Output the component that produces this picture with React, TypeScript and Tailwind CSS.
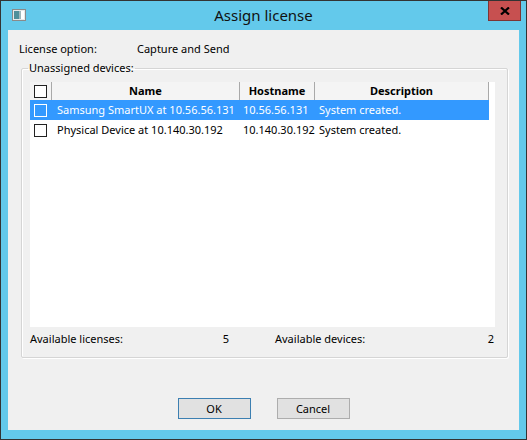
import React from "react";

type Device = { name: string; host: string; desc: string; selected?: boolean };

const devices: Device[] = [
  { name: "Samsung SmartUX at 10.56.56.131", host: "10.56.56.131", desc: "System created.", selected: true },
  { name: "Physical Device at 10.140.30.192", host: "10.140.30.192", desc: "System created." },
];

function WindowIcon() {
  return (
    <svg width="14" height="12" viewBox="0 0 14 12">
      <rect x="0.5" y="0.5" width="13" height="11" fill="#e8e8e8" stroke="#8a8a8a" />
      <rect x="2" y="2" width="5" height="8" fill="#4f8f9a" />
      <rect x="7" y="2" width="2" height="8" fill="#9fb7bb" />
      <rect x="9" y="2" width="3" height="8" fill="#ffffff" />
    </svg>
  );
}

function CloseGlyph() {
  return (
    <svg width="10" height="8" viewBox="0 0 10 8">
      <path d="M1 0.5 L9 7.5 M9 0.5 L1 7.5" stroke="#000" strokeWidth="2.2" />
    </svg>
  );
}

function Check({ light }: { light?: boolean }) {
  return (
    <div
      className={
        light
          ? "w-[13px] h-[13px] border border-white"
          : "w-[13px] h-[13px] border border-[#222] bg-white"
      }
    />
  );
}

export default function App() {
  return (
    <div className="w-[527px] h-[440px] border border-[#333] bg-[#63c9eb] flex flex-col font-['Noto_Sans','Liberation_Sans',sans-serif] text-[11px] text-black">
      {/* Title bar */}
      <div className="h-[29px] grid grid-cols-[1fr_auto_1fr]">
        <div className="pl-[11px] pt-[8px]">
          <WindowIcon />
        </div>
        <div className="pt-[4px] text-[15px] leading-[20px] text-[#111]">Assign license</div>
        <div className="flex justify-end pr-[5px]">
          <button className="w-[33px] h-[20px] bg-[#c75050] border border-t-0 border-[#7d3434] flex items-center justify-center">
            <CloseGlyph />
          </button>
        </div>
      </div>

      {/* Client area */}
      <div className="mx-[7px] h-[400px] bg-[#f0f0f0] flex flex-col">
        <div className="flex pl-[11px] pt-[11px] leading-[16px]">
          <span className="w-[118px]">License option:</span>
          <span>Capture and Send</span>
        </div>

        <fieldset className="mt-[3px] ml-[13px] mr-[11px] h-[298px] border border-[#d5d5d5] rounded-[2px] px-[8px] shadow-[inset_1px_1px_0_#fff,1px_1px_0_#fff]">
          <legend className="ml-[-2px] px-[1px] leading-[16px]">Unassigned devices:</legend>

          <div className="mt-[6px] w-[465px] h-[245px] bg-white">
            {/* Header */}
            <div className="flex h-[18px] bg-[#f4f4f4] w-[459px] font-bold">
              <div className="w-[22px] border-r border-[#a9a9a9] flex items-center pl-[4px]">
                <Check />
              </div>
              <div className="w-[188px] border-r border-[#a9a9a9] flex items-center justify-center">Name</div>
              <div className="w-[75px] border-r border-[#a9a9a9] flex items-center justify-center">Hostname</div>
              <div className="w-[174px] border-r border-[#a9a9a9] flex items-center justify-center">Description</div>
            </div>

            {devices.map((d) => (
              <div
                key={d.name}
                className={
                  d.selected
                    ? "flex h-[20px] w-[459px] bg-[#3399ff] text-white"
                    : "flex h-[20px] w-[459px]"
                }
              >
                <div className="w-[22px] flex items-center pl-[4px]">
                  <Check light={d.selected} />
                </div>
                <div className="w-[188px] flex items-center pl-[5px] whitespace-nowrap overflow-hidden">{d.name}</div>
                <div className="w-[75px] flex items-center pl-[3px] whitespace-nowrap overflow-hidden">{d.host}</div>
                <div className="w-[174px] flex items-center pl-[4px] whitespace-nowrap overflow-hidden">{d.desc}</div>
              </div>
            ))}
          </div>

          <div className="flex mt-[4px] leading-[16px]">
            <div className="w-[199px] flex justify-between">
              <span>Available licenses:</span>
              <span>5</span>
            </div>
            <div className="ml-[46px] w-[219px] flex justify-between">
              <span>Available devices:</span>
              <span>2</span>
            </div>
          </div>
        </fieldset>

        <div className="mt-[40px] flex justify-center gap-[26px]">
          <button className="w-[73px] h-[21px] bg-[#e1e1e1] border border-[#3c7fb1] leading-[19px]">OK</button>
          <button className="w-[73px] h-[21px] bg-[#e1e1e1] border border-[#adadad] leading-[19px]">Cancel</button>
        </div>
      </div>
    </div>
  );
}
